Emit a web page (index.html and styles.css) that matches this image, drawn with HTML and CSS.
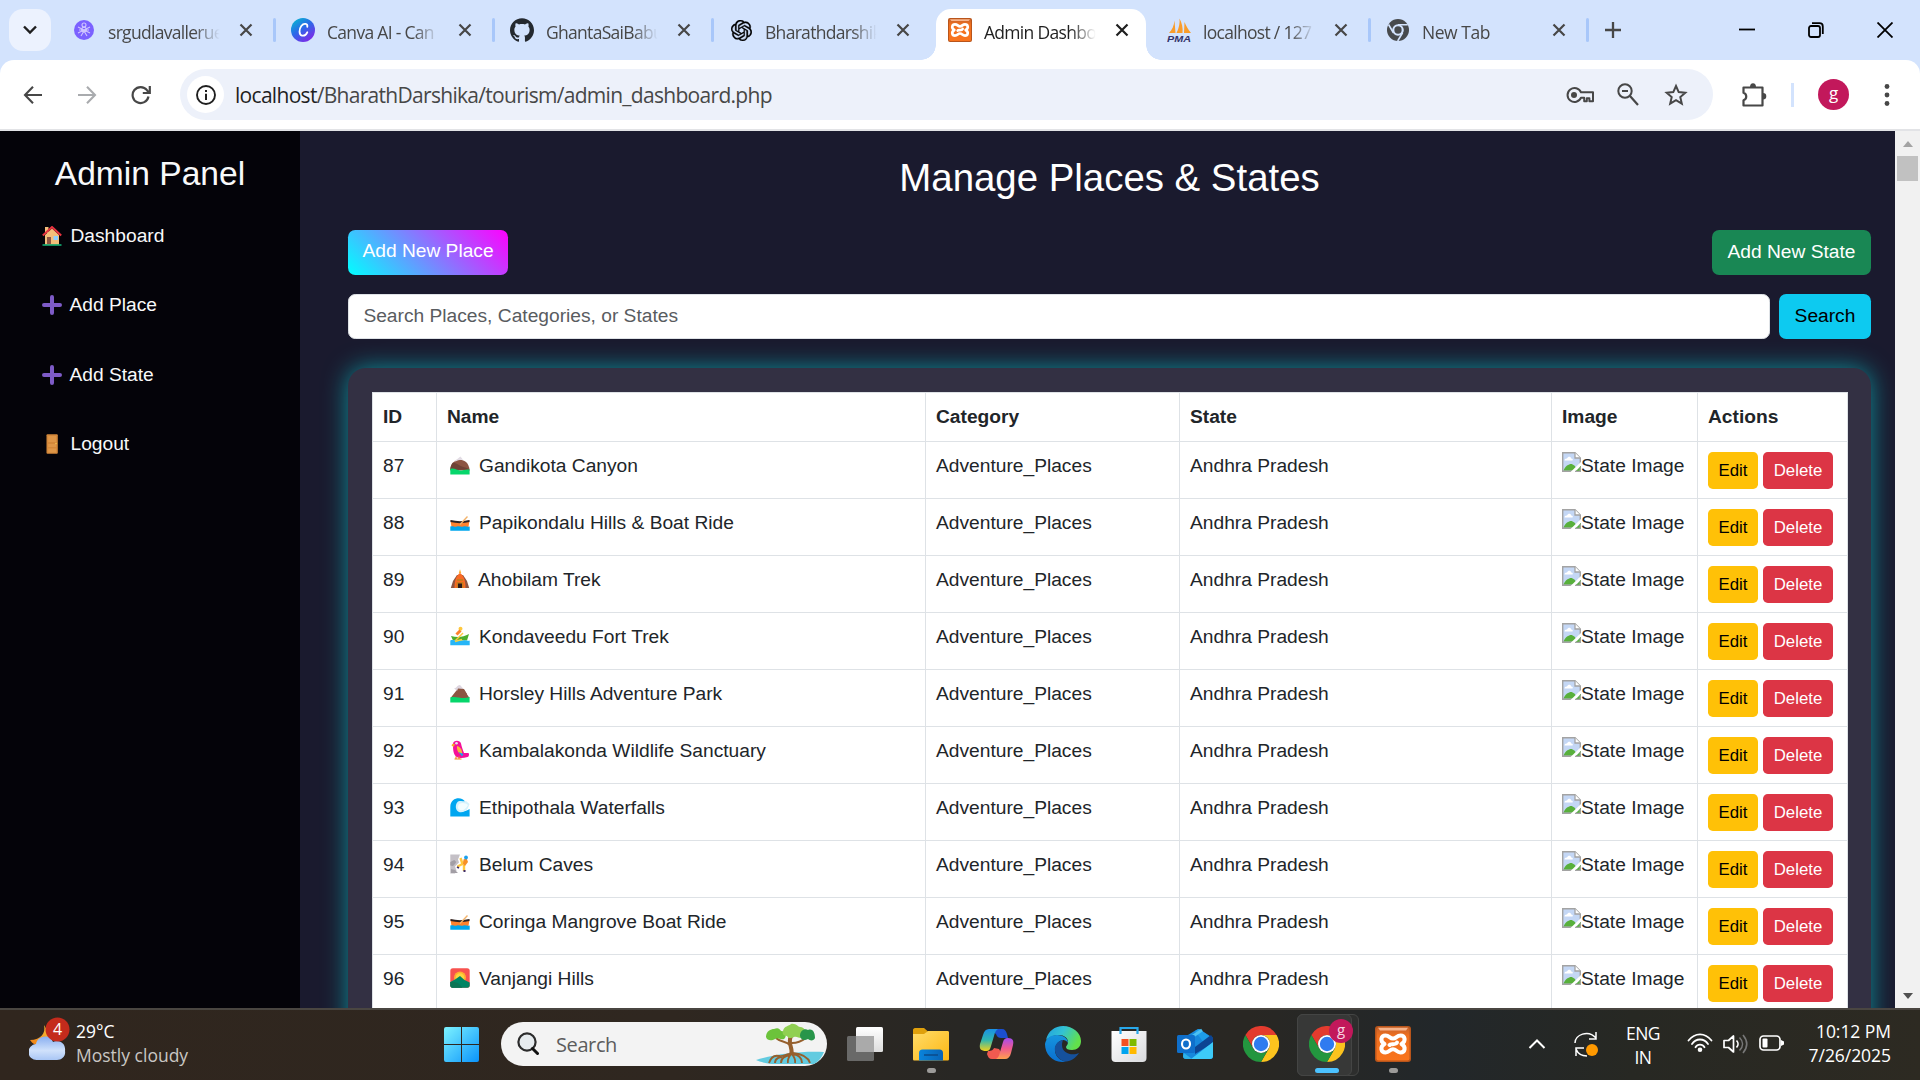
FILE: index.html
```html
<!DOCTYPE html>
<html lang="en">
<head>
<meta charset="utf-8">
<title>Admin Dashboard</title>
<link rel="stylesheet" href="styles.css">
</head>
<body>
<svg class="defs" aria-hidden="true">
  <defs>
    <linearGradient id="gCanva" x1="0" y1="0" x2=".7" y2="1"><stop offset="0" stop-color="#00c4cc"/><stop offset=".5" stop-color="#2a6be8"/><stop offset="1" stop-color="#7d2ae8"/></linearGradient>
    <linearGradient id="gStart" x1="0" y1="0" x2="1" y2="1"><stop offset="0" stop-color="#7df3ff"/><stop offset="1" stop-color="#0a93fb"/></linearGradient>
    <linearGradient id="gOrange" x1="0" y1="0" x2="0" y2="1"><stop offset="0" stop-color="#c8622a"/><stop offset=".25" stop-color="#f0701f"/><stop offset="1" stop-color="#f9741d"/></linearGradient>
    <linearGradient id="gCloud" x1="0" y1="0" x2="0" y2="1"><stop offset="0" stop-color="#88aef0"/><stop offset=".6" stop-color="#d0e1fb"/><stop offset="1" stop-color="#a9c6f5"/></linearGradient>
    <linearGradient id="gMoon" x1="1" y1="0" x2="0" y2="1"><stop offset="0" stop-color="#f8c53a"/><stop offset="1" stop-color="#f07c12"/></linearGradient>
    <linearGradient id="gFolder" x1="0" y1="0" x2="1" y2="1"><stop offset="0" stop-color="#ffdc69"/><stop offset="1" stop-color="#fdb713"/></linearGradient>
    <linearGradient id="gTray" x1="0" y1="0" x2="1" y2="0"><stop offset="0" stop-color="#0a84dc"/><stop offset="1" stop-color="#0863b5"/></linearGradient>
    <linearGradient id="gEdge" x1="0" y1="0" x2="1" y2=".4"><stop offset="0" stop-color="#1f9fe0"/><stop offset=".5" stop-color="#33c2d3"/><stop offset="1" stop-color="#62e04b"/></linearGradient>
    <linearGradient id="gEdge2" x1="0" y1="0" x2="0" y2="1"><stop offset="0" stop-color="#1695de"/><stop offset="1" stop-color="#0a6fd0"/></linearGradient>
    <linearGradient id="gCop1" x1="0" y1="0" x2="0" y2="1"><stop offset="0" stop-color="#1a8fe6"/><stop offset=".5" stop-color="#2fb6b0"/><stop offset="1" stop-color="#f0d21b"/></linearGradient>
    <linearGradient id="gCop2" x1="0" y1="0" x2="0" y2="1"><stop offset="0" stop-color="#a44cf0"/><stop offset=".5" stop-color="#ef5a8e"/><stop offset="1" stop-color="#ffa04e"/></linearGradient>
    <linearGradient id="gStore" x1="0" y1="0" x2="1" y2="1"><stop offset="0" stop-color="#fff"/><stop offset="1" stop-color="#d9dadd"/></linearGradient>
    <linearGradient id="gWin" x1="0" y1="0" x2="0" y2="1"><stop offset="0" stop-color="#fff"/><stop offset="1" stop-color="#ddd"/></linearGradient>
  </defs>
  <symbol id="close" viewBox="0 0 14 14"><path d="M1.5 1.5l11 11M12.5 1.5l-11 11" stroke="currentColor" stroke-width="2.2" fill="none"/></symbol>
  <symbol id="xampp" viewBox="0 0 36 36"><rect width="36" height="36" rx="3" fill="#b9551b"/><rect x="1.5" y="1.5" width="33" height="33" rx="2" fill="url(#gOrange)"/><path d="M3 1.8h30l-2 2.6H5z" fill="#f7b48b"/><path d="M9.500 18C4.500 15 6 9.500 10.500 9.500c4 0 4 3 7.500 3s3.500-3 7.500-3c4.500 0 6 5.500 1 8.500 5 3 3.500 8.500-1 8.500-4 0-4-3.200-7.500-3.200s-3.500 3.200-7.500 3.200C6 26.500 4.500 21 9.500 18zM14.500 19c1-2 6 .6 7.500-2.500" fill="none" stroke="#fff" stroke-width="4" stroke-linejoin="round" stroke-linecap="round"/></symbol>
  <symbol id="chrome" viewBox="0 0 36 36"><path d="M18 9H33.6A18 18 0 0 0 2.4 9L10.200 22.500A9 9 0 0 1 18 9z" fill="#e33b2e"/><path d="M33.600 9A18 18 0 0 1 18 36L25.800 22.500A9 9 0 0 0 18 9z" fill="#fcc31e"/><path d="M2.400 9A18 18 0 0 0 18 36L25.800 22.500A9 9 0 0 1 10.200 22.500z" fill="#23963f"/><circle cx="18" cy="18" r="9" fill="#fff"/><circle cx="18" cy="18" r="7.200" fill="#2f7bf0"/></symbol>
  <symbol id="broken" viewBox="0 0 19 20"><path d="M.7.7H13l5.300 5.300V19.300H.7z" fill="#c4d7f5"/><path d="M2.500 8.500c0-2 2-2 2.500-2 1-2.500 4-2 4.200 0 2 0 2 2 1 2z" fill="#fff"/><path d="M1.300 18.800C3 14 7 12 9 12s5 2 6 6.800z" fill="#58b03c"/><path d="M.7.7H13l5.300 5.300V19.300H.7z" fill="none" stroke="#a3a3a3" stroke-width="1.400"/><path d="M13 .7V6h5.300" fill="#fff" stroke="#a3a3a3" stroke-width="1.300"/><path d="M8 20.500L19.500 9.500V13L12.500 20.500z" fill="#fff"/><path d="M13 20l6-6v6z" fill="#58b03c"/><path d="M13 19.300h5.300v-4" stroke="#a3a3a3" stroke-width="1.300" fill="none"/></symbol>
  <symbol id="house" viewBox="0 0 20 20"><path d="M3 1h3.500v6H3z" fill="#f3bf7b"/><path d="M3 9l7-6.500L17 9v9.500H3z" fill="#f3bf7b"/><path d="M.8 9.500L10 1l9.200 8.500" stroke="#e8333f" stroke-width="2" fill="none"/><path d="M5 11h4v7.500H5z" fill="#8c5442"/><path d="M11.500 10h4.500v4h-4.500z" fill="#8fd0ff"/><path d="M.5 18.300h19v1.400H.5z" fill="#16c784"/></symbol>
  <symbol id="plus" viewBox="0 0 20 20"><path d="M10 2v16M2 10h16" stroke="#7e5bc7" stroke-width="4" stroke-linecap="round"/></symbol>
  <symbol id="door" viewBox="0 0 20 20"><rect x="4.500" y=".3" width="11.300" height="19.500" rx="1" fill="#d4883a"/><path d="M6.200 2h8v6h-8zM6.200 10h8v3h-8zM6.200 14.500h8v4h-8z" fill="#df9647"/><circle cx="14" cy="9.500" r=".8" fill="#f9c74f"/></symbol>
  <symbol id="hill" viewBox="0 0 20 20"><path d="M.3 15.500C.3 10 3 6.500 7.500 5c5-1.500 11.500 1.500 12.200 10.500z" fill="#8c5542"/><path d="M4.500 5.500C7 5 8.500 2.500 10.500 1.500L13 4.800C10.500 4.300 8 5 5.500 6.500z" fill="#e2dce4"/><path d="M.3 15c0-3 .8-5.500 2.700-7.500 3.500.5 6 3 9 4s5.500 1.500 7.500 3z" fill="#6f4336"/><path d="M.3 14C4 12.500 7 15.500 10 15.500s6-1.500 9.600-1v5H.3z" fill="#06d66b"/></symbol>
  <symbol id="mount" viewBox="0 0 20 20"><path d="M.5 15L8 5.500l3 1 2.500-.5L19.500 15z" fill="#8c5542"/><path d="M4 5.500C7 5 7 2 10 2l4 4.500-2.500 1-2-1L7.500 8z" fill="#ddd5df"/><path d="M8 5.500l6 .5L17 11c-5 0-8 3-12 2z" fill="#8c5542"/><path d="M.3 14.500c6-2 12 2.500 19.300-.5v5.500H.3z" fill="#06d66b"/></symbol>
  <symbol id="canoe" viewBox="0 0 20 20"><path d="M.5 8.500c6 1.500 13 1.500 19 0l-1 6.500h-17z" fill="#ff822d"/><path d="M.5 8c6 1.500 13 1.500 19 0v2c-6 1.500-13 1.500-19 0z" fill="#2b2224"/><path d="M10 12.500L17.500 4.500" stroke="#f2b36b" stroke-width="1.300"/><path d="M.3 14.500c3-1 4 .8 6.500 0s4 .8 6.500 0 4 .8 6.400 0v4.300H.3z" fill="#00a6ed"/></symbol>
  <symbol id="hut" viewBox="0 0 20 20"><path d="M.8 19L3 12l4-6h6l4 6 2.200 7z" fill="#8c5542"/><path d="M4.500 19c0-9 2.500-13 5.500-15 3 2 5.500 6 5.500 15z" fill="#f96a24"/><path d="M8.800 4L10 .3 11.200 4z" fill="#ffb02e"/><path d="M7 10h6v2H7zm-.5 3h7v6h-7z" fill="#ca7a1c"/><path d="M8 14.500h4V19H8z" fill="#2a1b1a"/></symbol>
  <symbol id="rower" viewBox="0 0 20 20"><circle cx="10.500" cy="2.800" r="2" fill="#ffc83d"/><path d="M10.500 4.500L6.500 8.500" stroke="#ff822d" stroke-width="3" fill="none"/><path d="M1 10c6 1.500 12 1.500 18-2l-2 6.500H3z" fill="#4cad2e"/><path d="M5 15L13 7" stroke="#ffc83d" stroke-width="1.500"/><path d="M.3 14.500c3-1.500 4 .8 6.500 0s4 .8 6.500 0 4 .8 6.400 0v4.700H.3z" fill="#26b5f7"/><path d="M5 15.500l7-2" stroke="#f5d33f" stroke-width="1.500"/></symbol>
  <symbol id="parrot" viewBox="0 0 20 20"><path d="M3 4c0-4 7-4.500 8-.5.500 3 2 6.500 3 9.500l4.500 0c1 1 .5 4-1 4-5 1.500-10 1.500-12-1-2.500-3-2.500-8-2.500-12z" fill="#f5109a"/><circle cx="6.500" cy="3.300" r="1.300" fill="#e9e3ee"/><path d="M1.500 5.500C2 3.500 4 3 5 4.500L3.500 7z" fill="#f9a825"/><path d="M7 6c4 1 5.500 5 5 8-3 0-5.500-3-5-8z" fill="#f9b33a"/><path d="M8.500 12l3.500 4.500 1.500-2.500z" fill="#1aa0ee"/><path d="M6 16.500v2M9 16.500v2M4.500 19h7" stroke="#f08a24" stroke-width="1.200"/></symbol>
  <symbol id="wave" viewBox="0 0 20 20"><path d="M.3 19.500V10C.3 1 9 0 12 2c4 2.500 3 3 2 3.500-5-1-8 2-6 6.500 2 3.500 7 3 11.600 0v7.500z" fill="#00a6f0"/><path d="M8 4.500c4-1.500 6 .5 8-.5l3.500 3-1.500 4c-2 4-8 5.500-10.500 3S5.500 6.500 8 4.500z" fill="#d5f2fc"/><path d="M9 7c3-2 7-1 9 1-2 4-5 6-8 5S8 9 9 7z" fill="#f3fdff"/></symbol>
  <symbol id="climber" viewBox="0 0 20 20"><path d="M.3.5H10l-2 5 1 3-4 4 1.500 4L5 19.500H.3z" fill="#c4c0c6"/><path d="M.3 8l4-2 2 2L5 10l-2 2-2.700-.5zM1 15l4 1 3 3H1z" fill="#a29ea5"/><path d="M10.500 4l2 6-5 2.500M14 11v6M16 7l-4 3" stroke="#ffc83d" stroke-width="2.400" fill="none"/><path d="M13.500 5.500l3-1.500 1.500 4-3 4-2-2z" fill="#f79026"/><circle cx="16" cy="3.500" r="1.900" fill="#1aa0ee"/><path d="M7 13l2 1M13.500 17h2" stroke="#3f2b66" stroke-width="1.800" fill="none"/></symbol>
  <symbol id="sunrise" viewBox="0 0 20 20"><rect x=".3" y=".3" width="19.400" height="19.400" rx="2.500" fill="#f8524f"/><circle cx="10" cy="9.500" r="6" fill="#ffb02e"/><circle cx="10" cy="9.500" r="4.200" fill="#fcd53f"/><path d="M.3 14L5 11.500 10 8l4.500 4 5.200 2.500v3c0 1.300-1 2.200-2.200 2.200h-15C1.200 19.700.3 18.700.3 17.500z" fill="#008463"/><path d="M.3 14c4 0 8-1 12 5.700H2.500C1.200 19.700.3 18.700.3 17.500z" fill="#0b7555"/></symbol>
</svg>

<div class="screen">
  <div class="tabstrip">
    <button class="tab-search"><svg width="16" height="10" viewBox="0 0 16 10"><path d="M2 1.500l6 6 6-6" fill="none" stroke="#1f1f1f" stroke-width="2.400"/></svg></button>
    <div class="tab"><span class="fav"><svg width="20" height="20" viewBox="0 0 20 20"><circle cx="10" cy="10" r="10" fill="#7b61ff"/><g fill="none" stroke="#cfc5ff" stroke-width="1.100"><circle cx="10" cy="5" r="2"/><circle cx="10" cy="9.500" r="2.300"/><path d="M4 7l12 6M16 7L4 13M7 16l3-5 3 5M5 10h10"/></g></svg></span><span class="label">srgudlavallerue</span><svg class="x"><use href="#close"/></svg><i class="sep"></i></div>
    <div class="tab"><span class="fav"><svg width="24" height="24" viewBox="0 0 24 24"><circle cx="12" cy="12" r="12" fill="url(#gCanva)"/><path d="M16.300 8.800c.6-3-3.300-4.300-6-.8-2.300 3-2.700 8.800.8 9.600 2.200.5 4.200-1.200 5.200-3.300" fill="none" stroke="#fff" stroke-width="1.800" stroke-linecap="round"/></svg></span><span class="label">Canva AI - Can</span><svg class="x"><use href="#close"/></svg><i class="sep"></i></div>
    <div class="tab"><span class="fav"><svg width="24" height="24" viewBox="0 0 24 24"><path fill="#24292f" d="M12 .297c-6.630 0-12 5.373-12 12 0 5.303 3.438 9.800 8.205 11.385.6.113.82-.258.82-.577 0-.285-.01-1.040-.015-2.040-3.338.724-4.042-1.610-4.042-1.610C4.422 18.070 3.633 17.700 3.633 17.700c-1.087-.744.084-.729.084-.729 1.205.084 1.838 1.236 1.838 1.236 1.070 1.835 2.809 1.305 3.495.998.108-.776.417-1.305.76-1.605-2.665-.3-5.466-1.332-5.466-5.930 0-1.310.465-2.380 1.235-3.220-.135-.303-.54-1.523.105-3.176 0 0 1.005-.322 3.300 1.230.96-.267 1.980-.399 3-.405 1.020.006 2.040.138 3 .405 2.280-1.552 3.285-1.230 3.285-1.230.645 1.653.24 2.873.12 3.176.765.84 1.230 1.910 1.230 3.220 0 4.610-2.805 5.625-5.475 5.920.42.36.81 1.096.81 2.220 0 1.606-.015 2.896-.015 3.286 0 .315.21.69.825.57C20.565 22.092 24 17.592 24 12.297c0-6.627-5.373-12-12-12"/></svg></span><span class="label">GhantaSaiBabu</span><svg class="x"><use href="#close"/></svg><i class="sep"></i></div>
    <div class="tab"><span class="fav"><svg width="21" height="21" viewBox="0 0 24 24"><path stroke="#000" stroke-width=".4" d="M22.2819 9.8211a5.9847 5.9847 0 0 0-.5157-4.9108 6.0462 6.0462 0 0 0-6.5098-2.9A6.0651 6.0651 0 0 0 4.9807 4.1818a5.9847 5.9847 0 0 0-3.9977 2.9 6.0462 6.0462 0 0 0 .7427 7.0966 5.98 5.98 0 0 0 .511 4.9107 6.051 6.051 0 0 0 6.5146 2.9001A5.9847 5.9847 0 0 0 13.2599 24a6.0557 6.0557 0 0 0 5.7718-4.2058 5.9894 5.9894 0 0 0 3.9977-2.9001 6.0557 6.0557 0 0 0-.7475-7.0729zm-9.022 12.6081a4.4755 4.4755 0 0 1-2.8764-1.0408l.1419-.0804 4.7783-2.7582a.7948.7948 0 0 0 .3927-.6813v-6.7369l2.02 1.1686a.071.071 0 0 1 .038.052v5.5826a4.504 4.504 0 0 1-4.4945 4.4944zm-9.6607-4.1254a4.4708 4.4708 0 0 1-.5346-3.0137l.142.0852 4.783 2.7582a.7712.7712 0 0 0 .7806 0l5.8428-3.3685v2.3324a.0804.0804 0 0 1-.0332.0615L9.74 19.9502a4.4992 4.4992 0 0 1-6.1408-1.6464zM2.3408 7.8956a4.485 4.485 0 0 1 2.3655-1.9728V11.6a.7664.7664 0 0 0 .3879.6765l5.8144 3.3543-2.0201 1.1685a.0757.0757 0 0 1-.071 0l-4.8303-2.7865A4.504 4.504 0 0 1 2.3408 7.872zm16.5963 3.8558L13.1038 8.364 15.1192 7.2a.0757.0757 0 0 1 .071 0l4.8303 2.7913a4.4944 4.4944 0 0 1-.6765 8.1042v-5.6772a.79.79 0 0 0-.407-.667zm2.0107-3.0231l-.142-.0852-4.7735-2.7818a.7759.7759 0 0 0-.7854 0L9.409 9.2297V6.8974a.0662.0662 0 0 1 .0284-.0615l4.8303-2.7866a4.4992 4.4992 0 0 1 6.6802 4.66zM8.3065 12.863l-2.02-1.1638a.0804.0804 0 0 1-.038-.0567V6.0742a4.4992 4.4992 0 0 1 7.3757-3.4537l-.142.0805L8.704 5.459a.7948.7948 0 0 0-.3927.6813zm1.0976-2.3654l2.602-1.4998 2.6069 1.4998v2.9994l-2.5974 1.4997-2.6067-1.4997Z"/></svg></span><span class="label">Bharathdarshik</span><svg class="x"><use href="#close"/></svg></div>
    <div class="tab active"><span class="fav"><svg width="24" height="24"><use href="#xampp"/></svg></span><span class="label">Admin Dashbo</span><svg class="x"><use href="#close"/></svg></div>
    <div class="tab"><span class="fav"><svg width="24" height="24" viewBox="0 0 24 24"><path d="M2 15C5 12 7 8 7.500 2.500L8.500 15zM9.500 15C12 10 13 5 12.500.5 15 5 16 10 15.500 15zM17 15l.5-11C19 8 21 11 24 15z" fill="#f99c2a"/><text x="0" y="23.500" class="pma" textLength="24" lengthAdjust="spacingAndGlyphs">PMA</text></svg></span><span class="label">localhost / 127</span><svg class="x"><use href="#close"/></svg><i class="sep"></i></div>
    <div class="tab last"><span class="fav"><svg width="22" height="22" viewBox="0 0 36 36"><circle cx="18" cy="18" r="18" fill="#474a4d"/><circle cx="18" cy="18" r="9.500" fill="#d3e3fd"/><circle cx="18" cy="18" r="6" fill="#474a4d"/><path d="M18 9.500H34M25.500 22.500L17.500 36M10.500 22.500L2.500 9" stroke="#d3e3fd" stroke-width="2.600"/></svg></span><span class="label">New Tab</span><svg class="x"><use href="#close"/></svg><i class="sep"></i></div>
    <button class="newtab"><svg width="16" height="16" viewBox="0 0 16 16"><path d="M8 0v16M0 8h16" stroke="#474747" stroke-width="2.300"/></svg></button>
    <div class="winbtns">
      <svg width="16" height="16" viewBox="0 0 16 16"><path d="M0 7.500h16" stroke="#000" stroke-width="1.800"/></svg>
      <svg width="16" height="16" viewBox="0 0 16 16"><rect x="1" y="4" width="11" height="11" rx="2" fill="none" stroke="#000" stroke-width="1.800"/><path d="M4 1.200h7.500c2 0 3.300 1.300 3.300 3.300V12" fill="none" stroke="#000" stroke-width="1.800"/></svg>
      <svg width="16" height="16" viewBox="0 0 16 16"><path d="M.5.5l15 15M15.500.5l-15 15" stroke="#000" stroke-width="1.800"/></svg>
    </div>
  </div>

  <div class="toolbar">
    <svg class="nav" width="20" height="20" viewBox="0 0 20 20"><path d="M19 10H2.500M10 1.800L2 10l8 8.200" fill="none" stroke="#474747" stroke-width="2.100"/></svg>
    <svg class="nav" width="20" height="20" viewBox="0 0 20 20"><path d="M1 10h16.500M10 1.800L18 10l-8 8.200" fill="none" stroke="#a9abae" stroke-width="2.100"/></svg>
    <svg class="nav" width="20" height="20" viewBox="0 0 20 20"><path d="M17.500 11.500A8 8 0 1 1 16 5.200l2 2.300" fill="none" stroke="#474747" stroke-width="2.200"/><path d="M18.800 1v7h-7" fill="none" stroke="#474747" stroke-width="2.200"/></svg>
    <div class="omnibox">
      <span class="site"><svg width="20" height="20" viewBox="0 0 20 20"><circle cx="10" cy="10" r="9" fill="none" stroke="#1f1f1f" stroke-width="1.900"/><path d="M10 8.800V15M10 5v2" stroke="#1f1f1f" stroke-width="2"/></svg></span>
      <span class="url"><b>localhost</b>/BharathDarshika/tourism/admin_dashboard.php</span>
      <svg class="oi" width="28" height="18" viewBox="0 0 28 18"><path d="M15 6.300h12v9h-3.600v-3h-2.600v3h-2.600v-3.600H15A7 7 0 1 1 15 6.300z" fill="none" stroke="#474747" stroke-width="2" stroke-linejoin="round"/><circle cx="8" cy="9" r="3" fill="#474747"/></svg>
      <svg class="oi" width="22" height="24" viewBox="0 0 22 24"><circle cx="8" cy="8" r="6.700" fill="none" stroke="#474747" stroke-width="2"/><path d="M13 13l8 9M5 8h6" stroke="#474747" stroke-width="2.200"/></svg>
      <svg class="oi" width="24" height="24" viewBox="0 0 24 24"><path d="M12 3l2.700 6.100 6.600.6-5 4.400 1.500 6.500L12 17.200l-5.800 3.400 1.500-6.500-5-4.400 6.600-.6z" fill="none" stroke="#474747" stroke-width="2"/></svg>
    </div>
    <svg class="ext" width="26" height="26" viewBox="0 0 26 26"><path d="M2.500 5.500h19v18h-19v-5.200a4 4 0 0 0 0-7.600z" fill="none" stroke="#474747" stroke-width="2.200" stroke-linejoin="round"/><path d="M9 5a3 3.800 0 0 1 6 0zM22 11a3.300 3.300 0 0 1 0 6.600z" fill="#474747"/></svg>
    <i class="tdiv"></i>
    <span class="avatar">g</span>
    <svg class="dots" width="6" height="24" viewBox="0 0 6 24"><circle cx="3" cy="3.500" r="2.400"/><circle cx="3" cy="12" r="2.400"/><circle cx="3" cy="20.500" r="2.400"/></svg>
  </div>

  <div class="page">
    <nav class="sidebar">
      <h3>Admin Panel</h3>
      <a><svg><use href="#house"/></svg>Dashboard</a>
      <a class="tight"><svg><use href="#plus"/></svg>Add Place</a>
      <a class="tight"><svg><use href="#plus"/></svg>Add State</a>
      <a><svg><use href="#door"/></svg>Logout</a>
    </nav>
    <main class="content">
      <h2>Manage Places &amp; States</h2>
      <div class="bar"><a class="btn neon">Add New Place</a><a class="btn success">Add New State</a></div>
      <div class="bar search"><div class="input">Search Places, Categories, or States</div><button class="btn info">Search</button></div>
      <div class="panel">
        <table>
          <colgroup><col class="c1"><col class="c2"><col class="c3"><col class="c4"><col class="c5"><col class="c6"></colgroup>
          <tr class="head"><th>ID</th><th>Name</th><th>Category</th><th>State</th><th>Image</th><th>Actions</th></tr>
          <tr><td>87</td><td><svg class="em"><use href="#hill"/></svg>Gandikota Canyon</td><td>Adventure_Places</td><td>Andhra Pradesh</td><td><svg class="br"><use href="#broken"/></svg>State Image</td><td><div class="acts"><a class="sm edit">Edit</a><a class="sm del">Delete</a></div></td></tr>
          <tr><td>88</td><td><svg class="em"><use href="#canoe"/></svg>Papikondalu Hills &amp; Boat Ride</td><td>Adventure_Places</td><td>Andhra Pradesh</td><td><svg class="br"><use href="#broken"/></svg>State Image</td><td><div class="acts"><a class="sm edit">Edit</a><a class="sm del">Delete</a></div></td></tr>
          <tr><td>89</td><td><svg class="em narrow"><use href="#hut"/></svg>Ahobilam Trek</td><td>Adventure_Places</td><td>Andhra Pradesh</td><td><svg class="br"><use href="#broken"/></svg>State Image</td><td><div class="acts"><a class="sm edit">Edit</a><a class="sm del">Delete</a></div></td></tr>
          <tr><td>90</td><td><svg class="em"><use href="#rower"/></svg>Kondaveedu Fort Trek</td><td>Adventure_Places</td><td>Andhra Pradesh</td><td><svg class="br"><use href="#broken"/></svg>State Image</td><td><div class="acts"><a class="sm edit">Edit</a><a class="sm del">Delete</a></div></td></tr>
          <tr><td>91</td><td><svg class="em"><use href="#mount"/></svg>Horsley Hills Adventure Park</td><td>Adventure_Places</td><td>Andhra Pradesh</td><td><svg class="br"><use href="#broken"/></svg>State Image</td><td><div class="acts"><a class="sm edit">Edit</a><a class="sm del">Delete</a></div></td></tr>
          <tr><td>92</td><td><svg class="em"><use href="#parrot"/></svg>Kambalakonda Wildlife Sanctuary</td><td>Adventure_Places</td><td>Andhra Pradesh</td><td><svg class="br"><use href="#broken"/></svg>State Image</td><td><div class="acts"><a class="sm edit">Edit</a><a class="sm del">Delete</a></div></td></tr>
          <tr><td>93</td><td><svg class="em"><use href="#wave"/></svg>Ethipothala Waterfalls</td><td>Adventure_Places</td><td>Andhra Pradesh</td><td><svg class="br"><use href="#broken"/></svg>State Image</td><td><div class="acts"><a class="sm edit">Edit</a><a class="sm del">Delete</a></div></td></tr>
          <tr><td>94</td><td><svg class="em"><use href="#climber"/></svg>Belum Caves</td><td>Adventure_Places</td><td>Andhra Pradesh</td><td><svg class="br"><use href="#broken"/></svg>State Image</td><td><div class="acts"><a class="sm edit">Edit</a><a class="sm del">Delete</a></div></td></tr>
          <tr><td>95</td><td><svg class="em"><use href="#canoe"/></svg>Coringa Mangrove Boat Ride</td><td>Adventure_Places</td><td>Andhra Pradesh</td><td><svg class="br"><use href="#broken"/></svg>State Image</td><td><div class="acts"><a class="sm edit">Edit</a><a class="sm del">Delete</a></div></td></tr>
          <tr><td>96</td><td><svg class="em"><use href="#sunrise"/></svg>Vanjangi Hills</td><td>Adventure_Places</td><td>Andhra Pradesh</td><td><svg class="br"><use href="#broken"/></svg>State Image</td><td><div class="acts"><a class="sm edit">Edit</a><a class="sm del">Delete</a></div></td></tr>
        </table>
      </div>
    </main>
    <div class="scroll"><i class="up"></i><i class="thumb"></i><i class="down"></i></div>
  </div>

  <div class="taskbar">
    <div class="weather">
      <svg width="42" height="46" viewBox="0 0 42 46"><path d="M15 8c2 8-3 15-14 15 3 5 9 7 13 5l8-8z" fill="url(#gMoon)"/><path d="M8 43a8 8 0 0 1-1-16c1-8 14-11 17-2 7-3 13 2 12 9 1 5-3 9-8 9z" fill="url(#gCloud)"/><circle cx="28.500" cy="12.500" r="12" fill="#c42b1c"/><text x="24" y="18" class="badge-num">4</text></svg>
      <div class="wt"><span>29°C</span><span class="dim">Mostly cloudy</span></div>
    </div>
    <svg class="start" width="35" height="35" viewBox="0 0 35 35"><path d="M2 0H17V17H0V2a2 2 0 0 1 2-2zM18 0H33a2 2 0 0 1 2 2V17H18zM0 18H17V35H2a2 2 0 0 1-2-2zM18 18H35V33a2 2 0 0 1-2 2H18z" fill="url(#gStart)"/></svg>
    <div class="tsearch">
      <svg width="22" height="24" viewBox="0 0 22 24"><circle cx="10" cy="10" r="8.600" fill="#e6ebee" stroke="#2c2c2c" stroke-width="2.200"/><path d="M15.500 16.500l5 5" stroke="#111" stroke-width="3" stroke-linecap="round"/></svg>
      <span>Search</span>
      <svg class="tree" width="70" height="44" viewBox="0 0 70 44"><path d="M0 38c20-6 44-9 68-8-2 5-5 9-9 12H16C9 41 4 40 0 38z" fill="#62cbe0"/><g fill="none" stroke="#96602e"><path d="M35 33C38 27 31 22 35 14" stroke-width="4"/><path d="M34 23C30 19 24 20 20 16M36 21c6 0 10-2 14-5" stroke-width="2"/><path d="M13 41c2-6 6-8 10-7s7-2 11-2M19 41c0-5 5-6 7-6M25 41c0-4 3-7 9-8M32 41c-1-4 1-6 3-9M39 41c1-4-1-6-3-9M46 41c0-5-3-8-9-9M54 41c-2-6-7-9-17-10" stroke-width="1.900"/></g><path d="M10 15c0-6 5-8 8-8 4-2 6 0 7 2 5 0 6 6 3 8-4 1-6-2-9 0s-8 2-9-2z" fill="#6cc33b"/><path d="M27 9c1-5 6-5 8-7 5-1 7 3 9 3 5 0 7 6 4 10-4 3-6-1-10 0-4 2-6 1-7-1-4 0-5-3-4-5z" fill="#90d052"/><path d="M44 14c0-6 5-8 8-6 5-2 7 3 7 8-1 3-5 3-7 1-4 2-7 1-8-3z" fill="#28954a"/></svg>
    </div>
    <div class="apps">
      <div class="app"><svg viewBox="0 0 36 36"><rect x="9" y="1" width="27" height="25" rx="1.500" fill="url(#gWin)"/><rect x="0" y="10" width="27" height="25" rx="1.500" fill="#777" fill-opacity=".82"/><path d="M9 10h18v16H9z" fill="#aaa"/></svg></div>
      <div class="app"><svg viewBox="0 0 36 36"><path d="M0 4c0-1 .8-2 2-2h9l4 3.500L11 9H0z" fill="#dfa00c"/><path d="M0 8h11l4-3h19.500c1 0 1.500.6 1.500 1.500V33c0 1-.6 1.500-1.500 1.500h-33C.6 34.500 0 34 0 33z" fill="url(#gFolder)"/><path d="M6 34.500V27a3.500 3.500 0 0 1 3.500-3.500h17A3.500 3.500 0 0 1 30 27v7.500z" fill="url(#gTray)"/><path d="M11 29h14" stroke="#0b4a88" stroke-width="1.500"/></svg><i class="dot"></i></div>
      <div class="app"><svg viewBox="0 0 36 36"><path d="M10 3h13c3 0 4 2 5 5l1 4h-7c-2 0-4-1-5-4z" fill="#1b4fd0"/><path d="M10 3h9c-2 1-3 3-4 7l-3 10c-1 4-2 5-5 5-5 0-7-2-6-7L4 9c1-4 3-6 6-6z" fill="url(#gCop1)"/><path d="M26 33H13c-3 0-4-2-5-5l1-3c4 0 5-1 6-3l5 1z" fill="#f05a50"/><path d="M26 33h-9c2-1 3-3 4-7l3-10c1-3 2-4 5-4 5 0 6 3 5 7l-2 8c-1 4-3 6-6 6z" fill="url(#gCop2)"/></svg></div>
      <div class="app"><svg viewBox="0 0 36 36"><path d="M1 14C3 5 10 0 18 0c10 0 18 7 18 15 0 6-4 9-9 9-4 0-6-1-6-3 0-1 2-2 2-5 0-4-4-7-9-7C8 9 3 12 1 14z" fill="url(#gEdge)"/><path d="M0 18C1 12 6 9 12 9c7 0 11 4 11 8-1-2-3-3-5-3-5 1-8 5-8 10 0 6 5 11 11 11.500C9 38 0 29 0 18z" fill="url(#gEdge2)"/><path d="M18 14c-6 1-9 6-8 11 1 6 6 10 11 10.500 5-.5 10-3.500 13-8.500-6 3-17 1-17-8 0-2 .5-4 1-5z" fill="#15519c"/></svg></div>
      <div class="app"><svg viewBox="0 0 36 36"><path d="M.5 5H35.500V32a4 4 0 0 1-4 4H4.500a4 4 0 0 1-4-4z" fill="url(#gStore)"/><path d="M9.500 8V2h17v6" fill="none" stroke="#28a8ea" stroke-width="2.200"/><path d="M10.500 13h7v7h-7z" fill="#f25022"/><path d="M18.500 13h7v7h-7z" fill="#7fba00"/><path d="M10.500 21h7v7h-7z" fill="#00a4ef"/><path d="M18.500 21h7v7h-7z" fill="#ffb900"/></svg></div>
      <div class="app"><svg viewBox="0 0 36 36"><path d="M6 12L20 3.500c1-.6 2-.6 3 0L36 12v18a3 3 0 0 1-3 3H9a3 3 0 0 1-3-3z" fill="#1688dc"/><path d="M18 5l4-2 13 9-8 5z" fill="#1d9eea"/><path d="M18 21l16-12 2 3v5L18 28z" fill="#0c4593"/><path d="M6 17l19-13" stroke="#4cc1f2" stroke-width="3"/><path d="M36 16v14a3 3 0 0 1-3 3H14z" fill="#3dcbf8"/><path d="M7 27l8 6H9c-1.500 0-3-1-3-3z" fill="#2cb2ea"/><rect y="9" width="18" height="18" rx="1.500" fill="#0f6fcb"/><ellipse cx="9" cy="18" rx="4" ry="4.500" fill="none" stroke="#fff" stroke-width="2.100"/></svg></div>
      <div class="app"><svg><use href="#chrome"/></svg></div>
      <div class="app current"><svg><use href="#chrome"/></svg><span class="pbadge">g</span><i class="dot"></i></div>
      <div class="app"><svg><use href="#xampp"/></svg><i class="dot"></i></div>
    </div>
    <div class="tray">
      <svg class="chev" width="18" height="12" viewBox="0 0 18 12"><path d="M1.500 10L9 2.500l7.500 7.500" fill="none" stroke="#fff" stroke-width="2"/></svg>
      <svg class="sync" width="26" height="28" viewBox="0 0 26 28"><path d="M2 13C2 5 15-1 23 8M23 2v7h-7M3 26v-8h8M3 19c2 5 6 7 11 7" fill="none" stroke="#fff" stroke-width="1.500"/><circle cx="19" cy="20" r="6" fill="#ff9900"/></svg>
      <div class="lang"><span>ENG</span><span>IN</span></div>
      <svg class="wifi" width="26" height="20" viewBox="0 0 26 20"><g fill="none" stroke="#fff" stroke-width="1.800" stroke-linecap="round"><path d="M1.500 7.500C8-.8 18-.8 24.500 7.500M5 11c4-6 12-6 16 0M8.500 14.300c2-3.500 7-3.500 9 0"/></g><circle cx="13" cy="16.800" r="2.300" fill="#fff"/></svg>
      <svg class="vol" width="26" height="20" viewBox="0 0 26 20"><path d="M1 6.500h4.500L10.500 2v16l-5-4.500H1z" fill="none" stroke="#fff" stroke-width="1.700" stroke-linejoin="round"/><path d="M13.500 6.500c2 2 2 5 0 7" fill="none" stroke="#fff" stroke-width="1.700"/><path d="M16.500 3.500c4 4 4 9 0 13M20 1c5 6 5 12 0 18" fill="none" stroke="#777" stroke-width="1.600"/></svg>
      <svg class="bat" width="25" height="18" viewBox="0 0 25 18"><rect x="1" y="2" width="20" height="14" rx="3.500" fill="none" stroke="#fff" stroke-width="1.700"/><rect x="3.500" y="4.500" width="5" height="9" rx="1" fill="#fff"/><path d="M22 6l3 1.500v3L22 12z" fill="#fff"/></svg>
      <div class="clock"><span>10:12 PM</span><span>7/26/2025</span></div>
    </div>
  </div>
</div>
</body>
</html>
```
FILE: styles.css
```css
* { box-sizing: border-box; }
body { margin: 0; background: #1a1a2e; font-family: "Liberation Sans", Arial, sans-serif; }
button { border: 0; padding: 0; font: inherit; background: none; }
svg { display: block; flex: none; }
.defs { position: absolute; width: 0; height: 0; }
.screen { width: 1920px; height: 1080px; display: flex; flex-direction: column; overflow: hidden; background: #d3e3fd; }

/* Browser tab strip */
.tabstrip { height: 60px; flex: none; background: #d3e3fd; display: flex; align-items: flex-start; padding: 9px 0 0 9px; font: 17.5px "Open Sans", "Noto Sans", sans-serif; color: #474747; }
.tab-search { width: 42px; height: 42px; border-radius: 14px; background: #ecf2fe; display: flex; align-items: center; justify-content: center; margin-right: 9px; }
.tab { width: 219px; height: 51px; flex: none; display: flex; align-items: center; padding: 0 0 9px 12px; position: relative; }
.fav { width: 24px; display: flex; justify-content: center; margin-right: 12px; }
.label { width: 114px; overflow: hidden; white-space: nowrap; letter-spacing: -.7px; margin-top: 3px; -webkit-mask-image: linear-gradient(90deg, #000 76%, transparent 98%); mask-image: linear-gradient(90deg, #000 76%, transparent 98%); }
.x { width: 14px; height: 14px; margin-left: 17px; }
.sep { width: 3px; height: 24px; border-radius: 2px; background: #a8c7fa; margin-left: 20px; }
.tab.active { width: 210px; margin-right: 9px; background: #fff; border-radius: 15px 15px 0 0; color: #1f1f1f; }
.tab.active::before, .tab.active::after { content: ""; position: absolute; bottom: 0; width: 15px; height: 15px; }
.tab.active::before { left: -15px; background: radial-gradient(circle at 0 0, transparent 14.5px, #fff 15px); }
.tab.active::after { right: -15px; background: radial-gradient(circle at 100% 0, transparent 14.5px, #fff 15px); }
.last .label { letter-spacing: -.45px; }
.last .x { margin-left: 16px; }
.pma { font: italic bold 9.5px "Liberation Sans", sans-serif; fill: #34346b; }
.newtab { margin: 13px 0 0 12px; }
.winbtns { display: flex; gap: 53px; margin: 13px 27px 0 auto; }

/* Browser toolbar */
.toolbar { height: 71px; flex: none; background: #fff; border-bottom: 2px solid #e2e3e6; display: flex; align-items: center; padding-left: 23px; font-family: "Open Sans", "Noto Sans", sans-serif; border-radius: 14px 14px 0 0; }
.nav { margin-right: 34px; }
.omnibox { width: 1533px; height: 51px; margin-left: -5px; border-radius: 26px; background: #edf1fa; display: flex; align-items: center; padding: 0 25px 0 7px; }
.site { width: 37px; height: 37px; border-radius: 50%; background: #fff; display: flex; align-items: center; justify-content: center; margin-right: 11px; }
.url { flex: 1; font-size: 21px; letter-spacing: -.7px; color: #474747; white-space: nowrap; }
.url b { font-weight: 400; color: #1f1f1f; }
.oi + .oi { margin-left: 23px; }
.oi:last-child { margin-left: 25px; }
.ext { margin-left: 28px; }
.tdiv { width: 3px; height: 24px; background: #d3e3fd; margin: 0 24px 0 24px; }
.avatar { width: 31px; height: 31px; border-radius: 50%; background: #c2185b; color: #fff; text-align: center; font: 17px/28px "Open Sans", sans-serif; margin-right: 35px; }
.dots { fill: #474747; }

/* Admin page */
.page { height: 877px; flex: none; display: flex; overflow: hidden; background: #1a1a2e; }
.sidebar { width: 300px; flex: none; background: #040309; color: #f8f9fa; padding: 23px 24px; }
.sidebar h3 { margin: 0 0 15px; font-weight: 400; font-size: 33.6px; line-height: 40.3px; text-align: center; }
.sidebar a { display: flex; align-items: center; gap: 9px; height: 52.8px; padding-left: 17.5px; margin-bottom: 16.8px; font-size: 19.2px; }
.sidebar a.tight { gap: 8px; }
.sidebar a svg { width: 20px; height: 20px; }
.content { width: 1595px; flex: none; padding: 24px 24px 0 48px; }
.content h2 { margin: 0; font-weight: 400; font-size: 38.4px; line-height: 46px; color: #fff; text-align: center; }
.bar { display: flex; justify-content: space-between; margin-top: 29px; }
.bar.search { margin-top: 19px; gap: 9px; }
.btn { height: 45px; border-radius: 7.2px; font-size: 19.2px; line-height: 43px; text-align: center; color: #fff; white-space: nowrap; }
.neon { width: 160px; line-height: 41px; background: linear-gradient(45deg, #0ff, #f0f); }
.success { width: 159px; background: #198754; }
.info { width: 92px; background: #0dcaf0; color: #000; padding-bottom: 2px; line-height: 42px; }
.input { flex: 1; height: 45px; border: 1px solid #dee2e6; border-radius: 7.2px; background: #fff; color: #595c5f; font-size: 19.2px; line-height: 41px; padding-left: 14.4px; }
.panel { margin-top: 29px; padding: 24px; height: 700px; border-radius: 18px; background: #333043; box-shadow: 0 0 24px rgba(0, 255, 255, .5); }
table { width: 1475px; table-layout: fixed; border-collapse: collapse; background: #fff; color: #212529; font-size: 19.2px; line-height: 28.8px; }
.c1 { width: 64px; } .c2 { width: 489px; } .c3 { width: 254px; } .c4 { width: 372px; } .c5 { width: 146px; } .c6 { width: 150px; }
tr { height: 57px; }
.head { height: 49px; }
th, td { border: 1px solid #dee2e6; padding: 9.6px 0 0 10px; text-align: left; vertical-align: top; white-space: nowrap; }
.em, .br { display: inline-block; }
.em { width: 20px; height: 20px; margin: 0 9px 0 3px; vertical-align: -3px; }
.em.narrow { margin-right: 8px; }
.br { width: 19px; height: 20px; vertical-align: 0; margin-top: -1px; }
.acts { display: flex; gap: 5px; }
.sm { height: 37px; border-radius: 4.8px; font-size: 16.8px; line-height: 37px; text-align: center; }
.edit { width: 50px; background: #ffc107; color: #000; }
.del { width: 70px; background: #dc3545; color: #fff; }
.scroll { width: 25px; background: #f1f1f1; display: flex; flex-direction: column; align-items: center; padding: 10px 0 9px; }
.up, .down { border: 5px solid transparent; border-top: 0; border-bottom: 6px solid #a3a3a3; }
.down { border-bottom: 0; border-top: 6px solid #505050; margin-top: auto; }
.thumb { width: 21px; height: 25px; background: #c1c1c1; margin-top: 9px; }

/* Windows taskbar */
.taskbar { height: 72px; flex: none; border-top: 2px solid #4a4641; background: linear-gradient(90deg, #30261e 0, #2f2720 35%, #282724 50%, #292723 65%, #22272a 75%, #272823 85%, #2d2a22); color: #fff; display: flex; position: relative; font: 17.5px/24px "Open Sans", "Noto Sans", sans-serif; }
.weather { width: 444px; flex: none; display: flex; padding: 7px 0 0 29px; }
.wt { display: flex; flex-direction: column; padding: 2px 0 0 5px; letter-spacing: 0; }
.dim { color: #c9c6c3; }
.badge-num { font: 16px "Open Sans", sans-serif; fill: #fff; }
.start { margin: 17px 22px 0 0; }
.tsearch { width: 326px; height: 44px; margin-top: 12px; flex: none; border-radius: 22px; background: #f3f3f3; display: flex; align-items: center; padding-left: 16px; color: #5c5c5c; font-size: 20px; letter-spacing: -.4px; overflow: hidden; }
.tsearch span { margin: 1px auto 0 17px; }
.tree { margin-right: 1px; }
.apps { display: flex; margin-left: 5px; }
.app { width: 66px; position: relative; display: flex; flex-direction: column; align-items: center; padding-top: 16px; }
.app svg { width: 36px; height: 36px; position: relative; }
.dot { width: 9px; height: 5px; border-radius: 3px; background: #9c9b99; margin-top: 6px; }
.current .dot { width: 24px; background: #4cc2ff; z-index: 1; }
.current::before, .current::after { content: ""; position: absolute; top: 4px; left: 3px; height: 60px; border-radius: 6px; border: 1px solid #444544; }
.current::before { width: 60px; background: #2d2e2d; }
.current::after { width: 53px; background: #373837; }
.current svg { z-index: 1; }
.pbadge { position: absolute; z-index: 2; left: 35px; top: 9px; width: 24px; height: 24px; border-radius: 50%; background: #c2185b; font-size: 15px; line-height: 21px; text-align: center; color: #f7d5e2; }
.tray { margin-left: auto; display: flex; align-items: flex-start; padding: 0 29px 0 0; }
.chev { margin: 28px 27px 0 0; }
.sync { margin: 20px 24px 0 0; }
.lang { width: 40px; margin: 11px 24px 0 0; display: flex; flex-direction: column; align-items: center; letter-spacing: -.5px; }
.wifi { margin: 23px 10px 0 0; }
.vol { margin: 24px 10px 0 0; }
.bat { margin: 24px 0 0; }
.clock { width: 107px; margin-top: 9px; display: flex; flex-direction: column; align-items: flex-end; letter-spacing: -.05px; }
```
